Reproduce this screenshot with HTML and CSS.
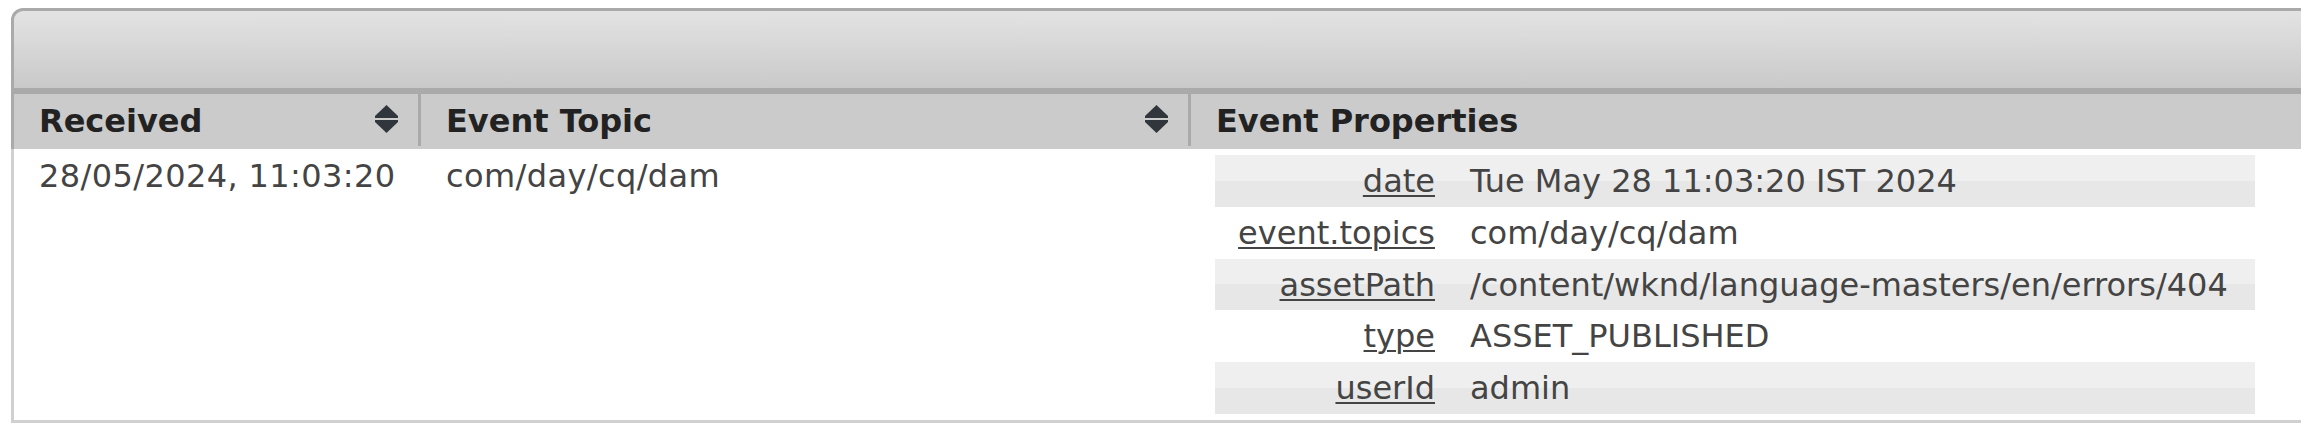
FILE: index.html
```html
<!DOCTYPE html>
<html lang="en">
<head>
<meta charset="utf-8">
<title>Event Log</title>
<link rel="stylesheet" href="styles.css">
</head>
<body>
<div class="panel">
  <div class="toolbar"></div>
  <div class="thead">
    <div class="th sep"><span>Received</span><svg class="sort" viewBox="0 0 23 28" width="23" height="28"><polygon points="11.5,0 23,11 23,13 0,13 0,11"/><polygon points="0,15 23,15 23,17 11.5,28 0,17"/></svg></div>
    <div class="th sep"><span>Event Topic</span><svg class="sort" viewBox="0 0 23 28" width="23" height="28"><polygon points="11.5,0 23,11 23,13 0,13 0,11"/><polygon points="0,15 23,15 23,17 11.5,28 0,17"/></svg></div>
    <div class="th"><span>Event Properties</span></div>
  </div>
  <div class="tbody">
    <div class="td">28/05/2024, 11:03:20</div>
    <div class="td">com/day/cq/dam</div>
    <div class="td td-props">
      <div class="props">
        <div class="prop"><span class="key">date</span><span class="val">Tue May 28 11:03:20 IST 2024</span></div>
        <div class="prop"><span class="key">event.topics</span><span class="val">com/day/cq/dam</span></div>
        <div class="prop"><span class="key">assetPath</span><span class="val">/content/wknd/language-masters/en/errors/404</span></div>
        <div class="prop"><span class="key">type</span><span class="val">ASSET_PUBLISHED</span></div>
        <div class="prop"><span class="key">userId</span><span class="val">admin</span></div>
      </div>
    </div>
  </div>
</div>
</body>
</html>
```
FILE: styles.css
```css
html, body {
  margin: 0;
  padding: 0;
  overflow: hidden;
  background: #fff;
}
body {
  font-family: "DejaVu Sans", Verdana, sans-serif;
  font-size: 32px;
  line-height: 1.3;
  color: #444;
}
.panel {
  width: 2330px;
  margin: 8px 0 0 11px;
}
.toolbar {
  box-sizing: content-box;
  height: 77px;
  border: 3px solid #aaa;
  border-bottom-width: 6px;
  border-top-left-radius: 12px;
  border-top-right-radius: 12px;
  background: linear-gradient(#e3e3e3, #c9c9c9);
}
.thead {
  display: grid;
  grid-template-columns: 407px 770px 1fr;
  border-left: 3px solid #aaa;
  background: #cbcbcb;
  padding-bottom: 3px;
}
.th {
  box-sizing: border-box;
  height: 52px;
  display: flex;
  align-items: center;
  justify-content: space-between;
  padding: 3px 20px 0 25px;
  font-weight: bold;
  color: #222;
}
.th.sep {
  border-right: 3px solid #aaa;
}
.sort {
  display: block;
  fill: #30363b;
  margin-top: -5px;
}
.tbody {
  display: grid;
  grid-template-columns: 407px 770px 1fr;
  border-left: 3px solid #d0d0d0;
  border-bottom: 3px solid #d0d0d0;
}
.td {
  padding: 7px 25px 5px;
  letter-spacing: 0.4px;
}
.td-props {
  padding: 6px 25px 6px 24px;
  letter-spacing: 0;
}
.props {
  width: 1040px;
}
.prop {
  box-sizing: border-box;
  display: flex;
  align-items: center;
  height: 51.8px;
  padding-top: 2px;
}
.prop:nth-child(odd) {
  background: linear-gradient(#efefef 50%, #e7e7e7 50%);
}
.key {
  box-sizing: border-box;
  width: 220px;
  flex: none;
  text-align: right;
  text-decoration: underline;
  text-decoration-thickness: 2px;
  text-underline-offset: 3px;
  color: #444;
}
.val {
  padding-left: 35px;
  white-space: nowrap;
}
```
